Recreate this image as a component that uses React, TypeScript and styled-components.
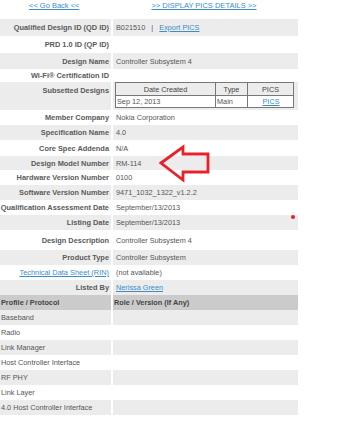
import React from 'react';
import styled, { createGlobalStyle } from 'styled-components';

const GlobalStyle = createGlobalStyle`
  body {
    margin: 0;
    background: #fff;
    font-family: 'Liberation Sans', Arial, sans-serif;
  }
`;

const App = () => {
  const rows = [
    { label: 'Qualified Design ID (QD ID)', h: 17, value: (
      <>
        B021510&nbsp;&nbsp;&nbsp;|&nbsp;&nbsp;&nbsp;<Link href='#'>Export PICS</Link>
      </>
    ) },
    { label: 'PRD 1.0 ID (QP ID)', h: 17 },
    { label: 'Design Name', h: 16, value: 'Controller Subsystem 4' },
    { label: 'Wi-Fi® Certification ID', h: 13 },
  ];
  const rows2 = [
    { label: 'Member Company', h: 15, value: 'Nokia Corporation' },
    { label: 'Specification Name', h: 15, value: '4.0' },
    { label: 'Core Spec Addenda', h: 16, value: 'N/A' },
    { label: 'Design Model Number', h: 14, value: 'RM-114' },
    { label: 'Hardware Version Number', h: 15, value: '0100' },
    { label: 'Software Version Number', h: 15, value: '9471_1032_1322_v1.2.2' },
    { label: 'Qualification Assessment Date', h: 15, value: 'September/13/2013' },
    { label: 'Listing Date', h: 15, value: 'September/13/2013' },
    { label: 'Design Description', h: 20, value: 'Controller Subsystem 4' },
    { label: 'Product Type', h: 15, value: 'Controller Subsystem' },
  ];
  const protocols = [
    'Baseband',
    'Radio',
    'Link Manager',
    'Host Controller Interface',
    'RF PHY',
    'Link Layer',
    '4.0 Host Controller Interface',
  ];

  return (
    <Page>
      <GlobalStyle />
      <TopLinks>
        <Link href='#' $big>&lt;&lt; Go Back &lt;&lt;</Link>
        <Link href='#' $big>&gt;&gt; DISPLAY PICS DETAILS &gt;&gt;</Link>
      </TopLinks>

      <Details>
        {rows.map((r, i) => (
          <Row key={r.label} $h={r.h} $alt={i % 2 === 0}>
            <Label>{r.label}</Label>
            <Value>{r.value}</Value>
          </Row>
        ))}
        <Row $h={28} $alt $top>
          <Label>Subsetted Designs</Label>
          <Value $flush>
            <SubTable>
              <thead>
                <tr>
                  <SubHead $w={99}>Date Created</SubHead>
                  <SubHead $w={31}>Type</SubHead>
                  <SubHead>PICS</SubHead>
                </tr>
              </thead>
              <tbody>
                <tr>
                  <SubCell>Sep 12, 2013</SubCell>
                  <SubCell>Main</SubCell>
                  <SubCell $center>
                    <Link href='#'>PICS</Link>
                  </SubCell>
                </tr>
              </tbody>
            </SubTable>
          </Value>
        </Row>
        {rows2.map((r, i) => (
          <Row key={r.label} $h={r.h} $alt={i % 2 === 1}>
            <Label>{r.label}</Label>
            <Value>{r.value}</Value>
          </Row>
        ))}
        <Row $h={15}>
          <Label>
            <Link href='#'>Technical Data Sheet (RIN)</Link>
          </Label>
          <Value>(not available)</Value>
        </Row>
        <Row $h={15} $alt>
          <Label>Listed By</Label>
          <Value>
            <Link href='#'>Nerissa Green</Link>
          </Value>
        </Row>

        <Row $h={15} $head>
          <HeadCell>Profile / Protocol</HeadCell>
          <HeadCell>Role / Version (If Any)</HeadCell>
        </Row>
        {protocols.map((p, i) => (
          <Row key={p} $h={15} $alt={i % 2 === 0}>
            <Plain>{p}</Plain>
            <Value />
          </Row>
        ))}
      </Details>

      {/* red callout arrow pointing at the model number */}
      <Arrow width='56' height='40' viewBox='0 0 56 40'>
        <polygon
          points='3,19 25,3 25,10 50,10 50,28 25,28 25,36'
          fill='none'
          stroke='#e8202a'
          strokeWidth='2.8'
          strokeLinejoin='miter'
        />
      </Arrow>
      <Dot />
    </Page>
  );
};

export default App;

const Page = styled.div`
  width: 348px;
  min-height: 434px;
  position: relative;
  font-size: 7.3px;
  color: #555;
`;

const TopLinks = styled.div`
  height: 19px;
  display: flex;
  align-items: flex-start;
  padding-left: 29px;
  gap: 72px;
  line-height: 11px;
`;

const Link = styled.a<{ $big?: boolean }>`
  color: #3a8dc6;
  text-decoration: underline;
  font-weight: normal;
  font-size: ${p => (p.$big ? '7.5px' : 'inherit')};
`;

const Details = styled.div`
  width: 298px;
  display: flex;
  flex-direction: column;
`;

const Row = styled.div<{ $h: number; $alt?: boolean; $top?: boolean; $head?: boolean }>`
  height: ${p => p.$h}px;
  display: grid;
  grid-template-columns: 111px 1fr;
  column-gap: 2px;

  > * {
    background: ${p => (p.$head ? '#cbcbcb' : p.$alt ? '#ececec' : '#fff')};
    display: flex;
    align-items: ${p => (p.$top ? 'flex-start' : 'center')};
    padding-top: ${p => (p.$top ? '4px' : '0')};
    white-space: nowrap;
  }
`;

const Label = styled.div`
  justify-content: flex-end;
  padding-right: 2px;
  font-size: 7.4px;
  font-weight: bold;
  color: #5a5a5a;
`;

const Value = styled.div<{ $flush?: boolean }>`
  padding-left: ${p => (p.$flush ? '2px' : '3px')};
  color: #555;
  && {
    padding-top: ${p => (p.$flush ? '0' : 'inherit')};
  }
`;

const Plain = styled.div`
  padding-left: 1px;
  color: #555;
`;

const HeadCell = styled.div`
  padding-left: 1px;
  font-weight: bold;
  color: #444;
`;

const SubTable = styled.table`
  width: 179px;
  border-collapse: collapse;
  border: 1.5px solid #5a5a5a;
  font-size: 7.3px;
  color: #555;
`;

const SubHead = styled.th<{ $w?: number }>`
  width: ${p => (p.$w ? `${p.$w}px` : 'auto')};
  height: 12px;
  padding: 0;
  font-weight: normal;
  color: #444;
  background: #ececec;
  border: 1px solid #777;
  text-align: center;
`;

const SubCell = styled.td<{ $center?: boolean }>`
  height: 11px;
  padding: 0 0 0 1px;
  background: #fff;
  border: 1px solid #777;
  text-align: ${p => (p.$center ? 'center' : 'left')};
`;

const Arrow = styled.svg`
  position: absolute;
  left: 158px;
  top: 144px;
`;

const Dot = styled.div`
  position: absolute;
  left: 291px;
  top: 215px;
  width: 4px;
  height: 4px;
  border-radius: 50%;
  background: #e8202a;
`;
